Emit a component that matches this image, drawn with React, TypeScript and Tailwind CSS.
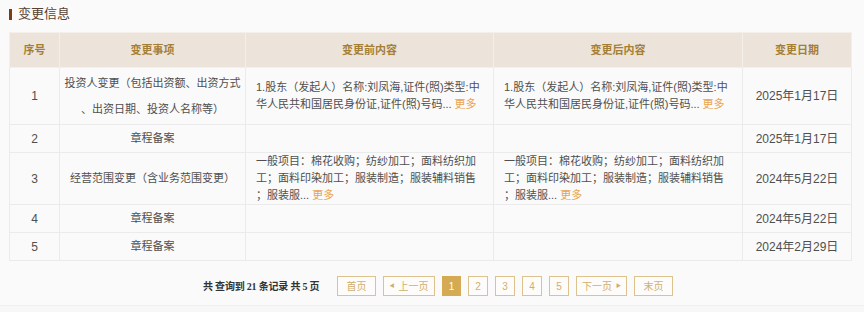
import React from "react";

const font = "font-['Liberation_Sans','Noto_Sans_CJK_SC',sans-serif]";

type Row = {
  no: string;
  item: React.ReactNode;
  before: string[];
  after: string[];
  date: string;
  tall?: boolean;
};

const more = <span className="text-[#eaa451] ml-[3px]">更多</span>;

const investor = [
  "1.股东（发起人）名称:刘凤海,证件(照)类型:中",
  "华人民共和国居民身份证,证件(照)号码...",
];
const scope = [
  "一般项目：棉花收购；纺纱加工；面料纺织加",
  "工；面料印染加工；服装制造；服装辅料销售",
  "；服装服...",
];

const rows: Row[] = [
  {
    no: "1",
    item: (
      <div className="leading-[26px]">
        投资人变更（包括出资额、出资方式
        <br />
        、出资日期、投资人名称等）
      </div>
    ),
    before: investor,
    after: investor,
    date: "2025年1月17日",
    tall: true,
  },
  { no: "2", item: "章程备案", before: [], after: [], date: "2025年1月17日" },
  { no: "3", item: "经营范围变更（含业务范围变更）", before: scope, after: scope, date: "2024年5月22日" },
  { no: "4", item: "章程备案", before: [], after: [], date: "2024年5月22日" },
  { no: "5", item: "章程备案", before: [], after: [], date: "2024年2月29日" },
];

function Content({ lines }: { lines: string[] }) {
  if (lines.length === 0) return null;
  return (
    <div className="leading-[17px]">
      {lines.map((line, index) => (
        <div key={index} className="whitespace-nowrap">
          {line}
          {index === lines.length - 1 && more}
        </div>
      ))}
    </div>
  );
}

function PageButton({ children, active, w }: { children: React.ReactNode; active?: boolean; w: string }) {
  return (
    <div
      className={
        active
          ? `${w} h-[20px] flex items-center justify-center whitespace-nowrap bg-[#d4aa52] border border-[#d4aa52] text-white text-[10px]`
          : `${w} h-[20px] flex items-center justify-center whitespace-nowrap border border-[#dcc28e] text-[#cfae6e] text-[10px] bg-[#fdfcfa]`
      }
    >
      {children}
    </div>
  );
}

export default function App() {
  const cell = "border border-[#ebebeb] text-center align-middle";
  const head = "border border-[#f4efe8] text-center font-bold text-[#a57e35]";

  return (
    <div className={`w-[864px] h-[312px] bg-[#fafafa] flex flex-col ${font}`}>
      <div className="h-[32px] pl-[9px] flex items-center gap-[6px] pb-[4px]">
        <div className="w-[3px] h-[11px] bg-[#7a3c14]" />
        <span className="text-[13px] text-[#574232]">变更信息</span>
      </div>

      <table className="ml-[9px] w-[842px] table-fixed border-collapse text-[11px] text-[#4f4f4f]">
        <colgroup>
          <col className="w-[50px]" />
          <col className="w-[186px]" />
          <col className="w-[248px]" />
          <col className="w-[249px]" />
          <col className="w-[109px]" />
        </colgroup>
        <thead>
          <tr className="h-[35px] bg-[#ece4da]">
            <th className={head}>序号</th>
            <th className={head}>变更事项</th>
            <th className={head}>变更前内容</th>
            <th className={head}>变更后内容</th>
            <th className={head}>变更日期</th>
          </tr>
        </thead>
        <tbody>
          {rows.map((row) => (
            <tr key={row.no} className={row.tall ? "h-[57px]" : row.before.length ? "h-[51px]" : "h-[28px]"}>
              <td className={`${cell} text-[12px]`}>{row.no}</td>
              <td className={cell}>{row.item}</td>
              <td className={`${cell} text-left pl-[10px]`}>
                <Content lines={row.before} />
              </td>
              <td className={`${cell} text-left pl-[10px]`}>
                <Content lines={row.after} />
              </td>
              <td className={`${cell} text-[12px]`}>{row.date}</td>
            </tr>
          ))}
        </tbody>
      </table>

      <div className="mt-[15px] flex items-center">
        <div className="ml-[203px] w-[134px] text-[10px] font-bold text-[#333333] tracking-[-0.2px] font-['Liberation_Serif','Noto_Sans_CJK_SC',serif] whitespace-nowrap">
          共 查询到 21 条记录 共 5 页
        </div>
        <div className="flex gap-[7px]">
          <PageButton w="w-[39px]">首页</PageButton>
          <PageButton w="w-[52px]">
            <span className="text-[5px] mr-[4px]">◀</span>上一页
          </PageButton>
          <PageButton w="w-[19px]" active>1</PageButton>
          <PageButton w="w-[20px]">2</PageButton>
          <PageButton w="w-[20px]">3</PageButton>
          <PageButton w="w-[20px]">4</PageButton>
          <PageButton w="w-[20px]">5</PageButton>
          <PageButton w="w-[51px]">
            下一页<span className="text-[5px] ml-[4px]">▶</span>
          </PageButton>
          <PageButton w="w-[39px]">末页</PageButton>
        </div>
      </div>

      <div className="mt-auto h-[7px] border-t border-[#efefef] bg-[#f7f7f7]" />
    </div>
  );
}
